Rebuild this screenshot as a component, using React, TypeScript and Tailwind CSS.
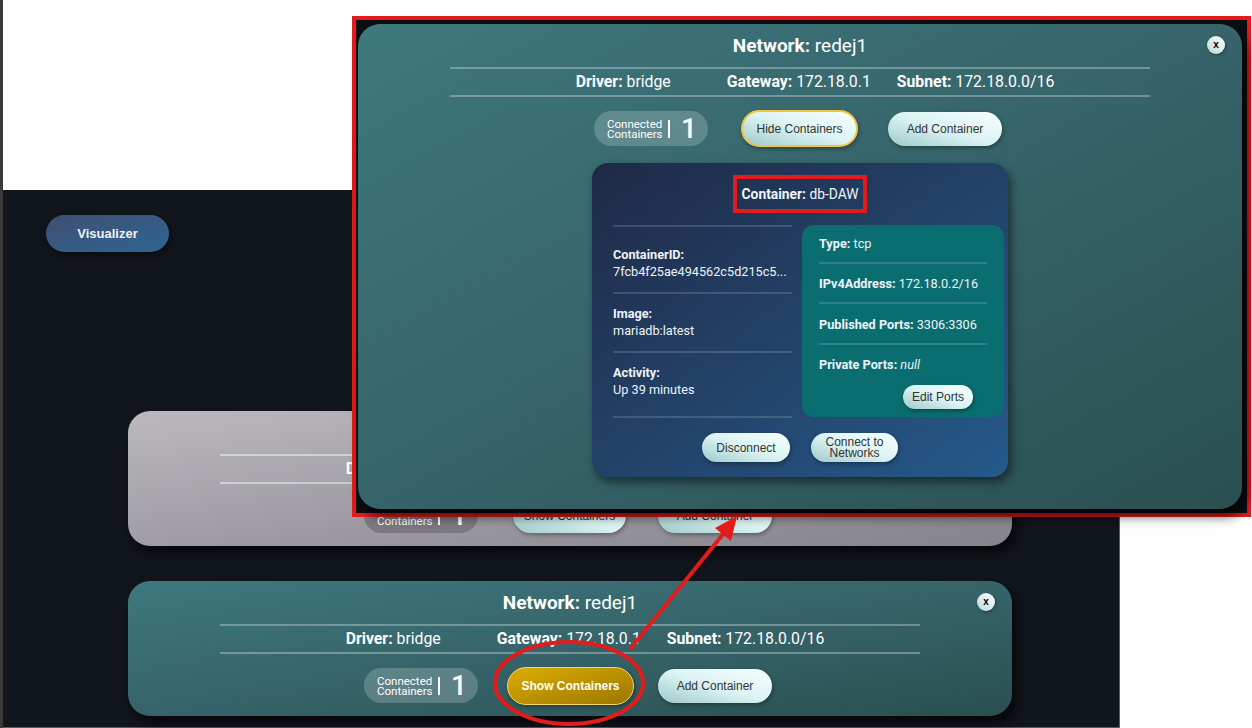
import React from "react";

const roboto = "font-['Roboto',Arial,sans-serif]";
const arial = "font-['Liberation_Sans',Arial,sans-serif]";

const lightBtn =
  "flex items-center justify-center rounded-full bg-linear-to-tr from-[#9fcaca] via-[#dcf3f3] to-[#f7ffff] text-[#333] text-[12px] shadow-[1px_2px_4px_rgba(0,0,0,0.35)] " +
  arial;

function CountPill({ gray }: { gray?: boolean }) {
  return (
    <div
      className={`flex h-[35px] w-[114px] items-center rounded-full pl-[13px] text-white ${roboto} ${
        gray ? "bg-[#7b797f]" : "bg-white/20"
      }`}
    >
      <div className="text-[11.5px] leading-[10px]">
        <div>Connected</div>
        <div>Containers</div>
      </div>
      <div className="ml-[5px] h-[18px] w-[2.5px] bg-white" />
      <div className="ml-[11px] text-[28px] font-medium leading-none">1</div>
    </div>
  );
}

function CloseBtn() {
  return (
    <button className="absolute right-[17px] top-[12px] flex h-[18px] w-[18px] items-center justify-center rounded-full bg-linear-to-tr from-[#b7dada] to-[#ffffff] text-[10px] font-bold leading-none text-black shadow-[1px_1px_3px_rgba(0,0,0,0.4)] font-['Liberation_Sans',Arial,sans-serif]">
      x
    </button>
  );
}

function ContainerCard() {
  const left = [
    { label: "ContainerID:", value: "7fcb4f25ae494562c5d215c5...", h: "h-[67px] pt-[19px]" },
    { label: "Image:", value: "mariadb:latest", h: "h-[59px] pt-[11px]" },
    { label: "Activity:", value: "Up 39 minutes", h: "h-[65px] pt-[11px]" },
  ];
  const ports = [
    { label: "Type:", value: "tcp", h: "h-[39px]" },
    { label: "IPv4Address:", value: "172.18.0.2/16", h: "h-[40px] pt-[2px]" },
    { label: "Published Ports:", value: "3306:3306", h: "h-[41px] pt-[2px]" },
  ];

  return (
    <div
      className={`mx-auto mt-[16px] w-[416px] rounded-[16px] bg-linear-to-br from-[#1e2a46] to-[#245a8b] pb-[15px] pt-[12px] text-[#eef3f8] shadow-[3px_5px_10px_rgba(0,0,0,0.5)] ${roboto}`}
    >
      <div className="flex justify-center">
        <div className="flex h-[38px] items-center border-[4px] border-[#e31b1b] px-[5px] text-[13.8px]">
          <b className="font-bold">Container:</b>&nbsp;db-DAW
        </div>
      </div>

      <div className="mt-[12px] flex">
        <div className="ml-[21px] w-[179px] border-b-2 border-white/15 text-[12.7px] leading-[17px]">
          {left.map((s) => (
            <div key={s.label} className={`border-t-2 border-white/15 ${s.h}`}>
              <div className="font-bold">{s.label}</div>
              <div className="whitespace-nowrap">{s.value}</div>
            </div>
          ))}
        </div>

        <div className="ml-[10px] h-[192px] w-[202px] rounded-[12px] bg-[#0a6e71] px-[17px] text-[12.7px]">
          {ports.map((p) => (
            <div key={p.label} className={`flex items-center border-b-2 border-white/15 ${p.h}`}>
              <b className="font-bold">{p.label}</b>&nbsp;{p.value}
            </div>
          ))}
          <div className="flex h-[40px] items-center">
            <b className="font-bold">Private Ports:</b>&nbsp;<i>null</i>
          </div>
          <div className="flex justify-end pr-[14px]">
            <button className={`${lightBtn} h-[24px] w-[70px]`}>Edit Ports</button>
          </div>
        </div>
      </div>

      <div className="mt-[15px] flex justify-center gap-[21px]">
        <button className={`${lightBtn} h-[29px] w-[88px]`}>Disconnect</button>
        <button className={`${lightBtn} h-[29px] w-[87px] leading-[11px]`}>
          Connect to
          <br />
          Networks
        </button>
      </div>
    </div>
  );
}

function NetworkCard({
  gray,
  title,
  gateway,
  subnet,
  mode,
}: {
  gray?: boolean;
  title: string;
  gateway: string;
  subnet: string;
  mode: "show" | "hide" | "plain";
}) {
  const bg = gray
    ? "bg-linear-to-br from-[#bbb9be] to-[#85838a]"
    : "bg-linear-to-br from-[#3d787d] via-[#36646a] to-[#2a4f50]";
  const line = gray ? "bg-white/45" : "bg-white/30";

  return (
    <div
      className={`relative w-[884px] rounded-[22px] pt-[10px] text-white shadow-[5px_7px_12px_rgba(0,0,0,0.7)] ${roboto} ${bg} ${
        mode === "hide" ? "pb-[32px]" : "pb-[12px]"
      }`}
    >
      <div className="text-center text-[19px] leading-[24px]">
        <b className="font-bold">Network:</b> {title}
      </div>
      <CloseBtn />

      <div className={`mx-auto mt-[9px] h-[2px] w-[700px] ${line}`} />
      <div className="flex h-[26px] items-center justify-center pl-[30px] text-[15.8px]">
        <span className="mr-[56px]">
          <b className="font-bold">Driver:</b> bridge
        </span>
        <span className="mr-[26px]">
          <b className="font-bold">Gateway:</b> {gateway}
        </span>
        <span>
          <b className="font-bold">Subnet:</b> {subnet}
        </span>
      </div>
      <div className={`mx-auto h-[2px] w-[700px] ${line}`} />

      <div className="mt-[13px] flex h-[37px] items-center justify-center pr-[4px]">
        <CountPill gray={gray} />
        {mode === "show" && (
          <button
            className={`ml-[29px] flex h-[38px] w-[127px] items-center justify-center rounded-full border-[1.5px] border-[#f6d865] bg-linear-to-br from-[#dcae00] to-[#9c7600] text-[12px] font-bold text-white shadow-[1px_2px_4px_rgba(0,0,0,0.35)] ${arial}`}
          >
            Show Containers
          </button>
        )}
        {mode === "plain" && (
          <button className={`${lightBtn} ml-[35px] h-[35px] w-[113px]`}>Show Containers</button>
        )}
        {mode === "hide" && (
          <button className={`${lightBtn} ml-[33px] h-[37px] w-[117px] border-2 border-[#f2c443]`}>
            Hide Containers
          </button>
        )}
        <button
          className={`${lightBtn} h-[34px] w-[114px] ${
            mode === "show" ? "ml-[24px]" : mode === "hide" ? "ml-[30px]" : "ml-[32px]"
          }`}
        >
          Add Container
        </button>
      </div>

      {mode === "hide" && <ContainerCard />}
    </div>
  );
}

export default function App() {
  return (
    <div className="relative flex h-[728px] w-[1252px] overflow-hidden bg-white">
      <div className="h-full w-[3px] bg-[#3a3a3a]" />

      <div className="flex flex-col">
        <div className="h-[190px]" />
        <div className="flex h-[538px] w-[1117px] flex-col border-r border-b border-[#585c61] bg-[#11151c]">
          <button
            className={`ml-[43px] mt-[25px] h-[37px] w-[123px] rounded-full bg-linear-to-br from-[#3e4f70] to-[#2c6594] text-[13px] font-bold text-[#eef2f7] shadow-[2px_3px_6px_rgba(0,0,0,0.5)] ${arial}`}
          >
            Visualizer
          </button>

          <div className="ml-[125px] mt-[159px] flex flex-col gap-[35px]">
            <NetworkCard gray title="bridge" gateway="172.17.0.1" subnet="172.17.0.0/16" mode="plain" />
            <NetworkCard title="redej1" gateway="172.18.0.1" subnet="172.18.0.0/16" mode="show" />
          </div>
        </div>
      </div>

      {/* zoomed view of the expanded card */}
      <div className="absolute left-[352px] top-[16px] h-[501px] w-[899px] border-[4px] border-[#e31b1b] bg-[#0b0e13] pl-[2px] pt-[4px]">
        <NetworkCard title="redej1" gateway="172.18.0.1" subnet="172.18.0.0/16" mode="hide" />
      </div>

      {/* annotations */}
      <svg
        className="pointer-events-none absolute left-0 top-0"
        width="1252"
        height="728"
        viewBox="0 0 1252 728"
      >
        <ellipse cx="569" cy="683" rx="74" ry="41" fill="none" stroke="#e31b1b" strokeWidth="4" />
        <line x1="630" y1="649" x2="724" y2="533" stroke="#e31b1b" strokeWidth="4" />
        <polygon points="737,516 731,541 715,528" fill="#e31b1b" />
      </svg>
    </div>
  );
}
